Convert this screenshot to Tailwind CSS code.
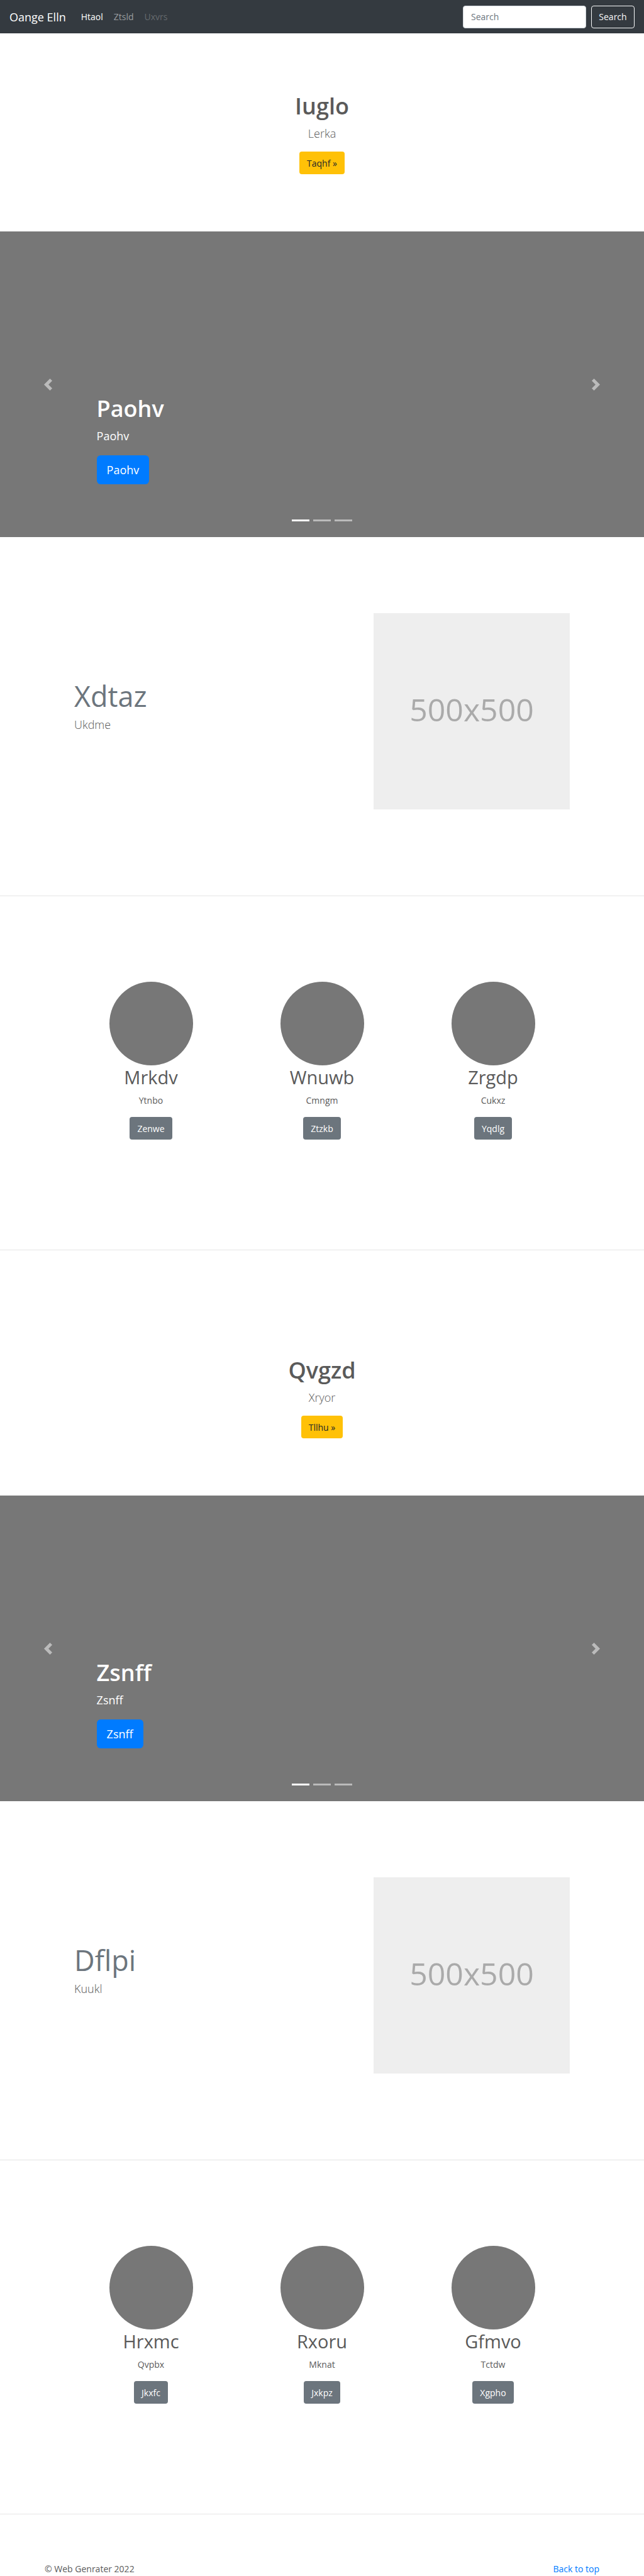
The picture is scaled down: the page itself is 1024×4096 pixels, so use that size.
<!DOCTYPE html>
<html lang="en">
<head>
<meta charset="utf-8">
<meta name="viewport" content="width=device-width, initial-scale=1">
<title>Oange Elln</title>
<script src="https://cdn.jsdelivr.net/npm/@tailwindcss/browser@4"></script>
</head>
<body class="bg-white font-['Open_Sans','Noto_Sans',sans-serif] text-[14px] leading-[23px] text-[#5a5a5a]">

<header>
  <nav class="flex h-[53px] items-center bg-[#343a40] px-[15px]">
    <a href="#" class="mr-6 text-[18px] leading-7 text-white">Oange Elln</a>
    <ul class="flex flex-1 gap-[17px]">
      <li><a href="#" class="text-white">Htaol</a></li>
      <li><a href="#" class="text-white/50">Ztsld</a></li>
      <li><a href="#" class="text-white/25">Uxvrs</a></li>
    </ul>
    <form class="flex gap-2">
      <input type="search" placeholder="Search" aria-label="Search" class="h-9 w-[196px] rounded border border-[#ced4da] bg-white px-3 placeholder:text-[#6c757d]">
      <button type="button" class="h-9 w-[69px] rounded border border-[#f8f9fa] text-[#f8f9fa]">Search</button>
    </form>
  </nav>
</header>

<main>
  <section class="flex flex-col items-center pt-[93px] pb-[91px] text-center">
    <h1 class="text-[36px] leading-[46px] font-semibold">Iuglo</h1>
    <p class="mt-[6px] text-[18px] leading-7 font-light">Lerka</p>
    <a href="#" class="mt-[15px] flex h-9 items-center rounded bg-[#ffc107] px-3 text-[#212529]">Taqhf »</a>
  </section>

  <section class="relative flex min-h-[486px] flex-col items-start justify-end bg-[#777] px-[15%] pb-[84px] text-white" aria-label="Carousel">
    <h2 class="text-[36px] leading-[46px] font-semibold">Paohv</h2>
    <p class="mt-[6px] text-[18px] leading-7">Paohv</p>
    <a href="#" class="mt-[17px] flex h-[46px] items-center rounded-md bg-[#007bff] px-4 text-[18px]">Paohv</a>
    <button type="button" aria-label="Previous" class="absolute inset-y-0 left-0 flex w-[15%] items-center justify-center opacity-50">
      <svg class="size-[19px]" viewBox="0 0 8 8" fill="#fff"><path d="M5.25 0l-4 4 4 4 1.5-1.5L4.25 4l2.5-2.5L5.25 0z"/></svg>
    </button>
    <button type="button" aria-label="Next" class="absolute inset-y-0 right-0 flex w-[15%] items-center justify-center opacity-50">
      <svg class="size-[19px]" viewBox="0 0 8 8" fill="#fff"><path d="M2.75 0l-1.5 1.5L3.75 4l-2.5 2.5L2.75 8l4-4-4-4z"/></svg>
    </button>
    <div class="absolute inset-x-0 bottom-[25px] flex justify-center gap-[6px]">
      <button type="button" aria-label="Slide 1" class="h-[3px] w-7 bg-white"></button>
      <button type="button" aria-label="Slide 2" class="h-[3px] w-7 bg-white/50"></button>
      <button type="button" aria-label="Slide 3" class="h-[3px] w-7 bg-white/50"></button>
    </div>
  </section>

  <section class="flex justify-between px-[118px] pt-[121px] pb-[137px]">
    <div class="pt-[101px]">
      <h2 class="text-[45px] leading-[62px] text-[#6c757d]">Xdtaz</h2>
      <p class="text-[18px] leading-7 font-light">Ukdme</p>
    </div>
    <div class="flex size-[312px] items-center justify-center bg-[#eee] pb-[6px] text-[50px] text-[#aaa]">500x500</div>
  </section>

  <hr class="border-t border-[#e5e5e5]">

  <section class="mx-auto grid max-w-[816px] grid-cols-3 pt-[136px] pb-[175px]">
    <div class="flex flex-col items-center">
      <div class="size-[133px] rounded-full bg-[#777]"></div>
      <h2 class="text-[29px] leading-[38px]">Mrkdv</h2>
      <p class="mt-[6px]">Ytnbo</p>
      <a href="#" class="mt-[15px] flex h-9 items-center rounded bg-[#6c757d] px-3 text-white">Zenwe</a>
    </div>
    <div class="flex flex-col items-center">
      <div class="size-[133px] rounded-full bg-[#777]"></div>
      <h2 class="text-[29px] leading-[38px]">Wnuwb</h2>
      <p class="mt-[6px]">Cmngm</p>
      <a href="#" class="mt-[15px] flex h-9 items-center rounded bg-[#6c757d] px-3 text-white">Ztzkb</a>
    </div>
    <div class="flex flex-col items-center">
      <div class="size-[133px] rounded-full bg-[#777]"></div>
      <h2 class="text-[29px] leading-[38px]">Zrgdp</h2>
      <p class="mt-[6px]">Cukxz</p>
      <a href="#" class="mt-[15px] flex h-9 items-center rounded bg-[#6c757d] px-3 text-white">Yqdlg</a>
    </div>
  </section>

  <hr class="border-t border-[#e5e5e5]">

  <section class="flex flex-col items-center pt-[168px] pb-[91px] text-center">
    <h1 class="text-[36px] leading-[46px] font-semibold">Qvgzd</h1>
    <p class="mt-[6px] text-[18px] leading-7 font-light">Xryor</p>
    <a href="#" class="mt-[15px] flex h-9 items-center rounded bg-[#ffc107] px-3 text-[#212529]">Tllhu »</a>
  </section>

  <section class="relative flex min-h-[486px] flex-col items-start justify-end bg-[#777] px-[15%] pb-[84px] text-white" aria-label="Carousel">
    <h2 class="text-[36px] leading-[46px] font-semibold">Zsnff</h2>
    <p class="mt-[6px] text-[18px] leading-7">Zsnff</p>
    <a href="#" class="mt-[17px] flex h-[46px] items-center rounded-md bg-[#007bff] px-4 text-[18px]">Zsnff</a>
    <button type="button" aria-label="Previous" class="absolute inset-y-0 left-0 flex w-[15%] items-center justify-center opacity-50">
      <svg class="size-[19px]" viewBox="0 0 8 8" fill="#fff"><path d="M5.25 0l-4 4 4 4 1.5-1.5L4.25 4l2.5-2.5L5.25 0z"/></svg>
    </button>
    <button type="button" aria-label="Next" class="absolute inset-y-0 right-0 flex w-[15%] items-center justify-center opacity-50">
      <svg class="size-[19px]" viewBox="0 0 8 8" fill="#fff"><path d="M2.75 0l-1.5 1.5L3.75 4l-2.5 2.5L2.75 8l4-4-4-4z"/></svg>
    </button>
    <div class="absolute inset-x-0 bottom-[25px] flex justify-center gap-[6px]">
      <button type="button" aria-label="Slide 1" class="h-[3px] w-7 bg-white"></button>
      <button type="button" aria-label="Slide 2" class="h-[3px] w-7 bg-white/50"></button>
      <button type="button" aria-label="Slide 3" class="h-[3px] w-7 bg-white/50"></button>
    </div>
  </section>

  <section class="flex justify-between px-[118px] pt-[121px] pb-[137px]">
    <div class="pt-[101px]">
      <h2 class="text-[45px] leading-[62px] text-[#6c757d]">Dflpi</h2>
      <p class="text-[18px] leading-7 font-light">Kuukl</p>
    </div>
    <div class="flex size-[312px] items-center justify-center bg-[#eee] pb-[6px] text-[50px] text-[#aaa]">500x500</div>
  </section>

  <hr class="border-t border-[#e5e5e5]">

  <section class="mx-auto grid max-w-[816px] grid-cols-3 pt-[136px] pb-[175px]">
    <div class="flex flex-col items-center">
      <div class="size-[133px] rounded-full bg-[#777]"></div>
      <h2 class="text-[29px] leading-[38px]">Hrxmc</h2>
      <p class="mt-[6px]">Qvpbx</p>
      <a href="#" class="mt-[15px] flex h-9 items-center rounded bg-[#6c757d] px-3 text-white">Jkxfc</a>
    </div>
    <div class="flex flex-col items-center">
      <div class="size-[133px] rounded-full bg-[#777]"></div>
      <h2 class="text-[29px] leading-[38px]">Rxoru</h2>
      <p class="mt-[6px]">Mknat</p>
      <a href="#" class="mt-[15px] flex h-9 items-center rounded bg-[#6c757d] px-3 text-white">Jxkpz</a>
    </div>
    <div class="flex flex-col items-center">
      <div class="size-[133px] rounded-full bg-[#777]"></div>
      <h2 class="text-[29px] leading-[38px]">Gfmvo</h2>
      <p class="mt-[6px]">Tctdw</p>
      <a href="#" class="mt-[15px] flex h-9 items-center rounded bg-[#6c757d] px-3 text-white">Xgpho</a>
    </div>
  </section>

  <hr class="border-t border-[#e5e5e5]">
</main>

<footer class="flex justify-between px-[71px] pt-[75px]">
  <p>© Web Genrater 2022</p>
  <a href="#" class="text-[#007bff]">Back to top</a>
</footer>

</body>
</html>
